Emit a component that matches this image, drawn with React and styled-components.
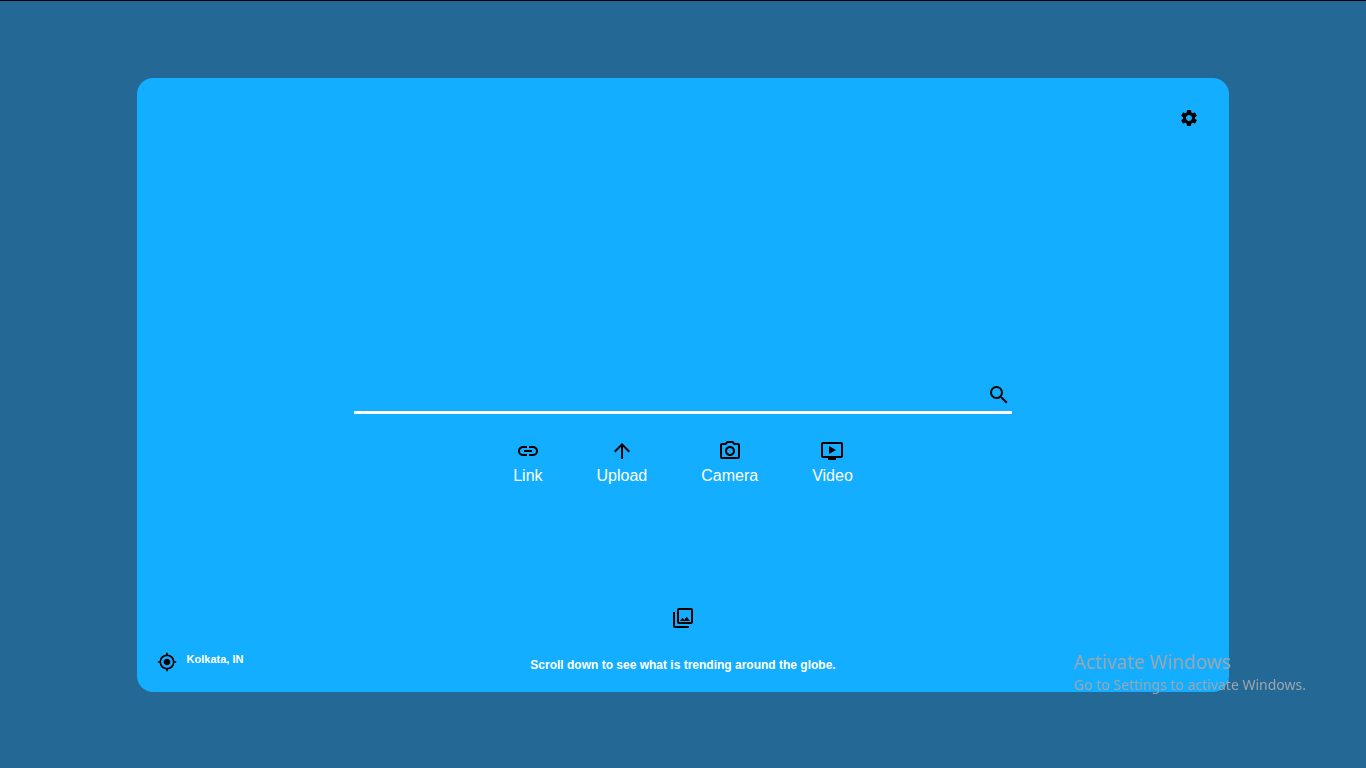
import React from "react";
import styled, { createGlobalStyle } from "styled-components";
import {
  MdSettings,
  MdSearch,
  MdLink,
  MdArrowUpward,
  MdOutlinePhotoCamera,
  MdOndemandVideo,
  MdOutlinePhotoLibrary,
  MdMyLocation,
} from "react-icons/md";

const GlobalStyle = createGlobalStyle`
  *, *::before, *::after { box-sizing: border-box; }
  body {
    margin: 0;
    background: #246896;
    font-family: "Liberation Sans", Arial, sans-serif;
  }
`;

const Page = styled.div`
  display: flex;
  min-height: 100vh;
  padding: 10vh 10vw calc(10vh - 1px);
  border-top: 1px solid #000;
`;

const Card = styled.main`
  flex: 1;
  display: flex;
  flex-direction: column;
  background: #13aeff;
  border-radius: 16px;
`;

const Header = styled.header`
  display: flex;
  justify-content: flex-end;
  padding: 30px 30px 0;
`;

const IconButton = styled.button`
  display: flex;
  padding: 0;
  border: 0;
  background: none;
  color: #000;
  cursor: pointer;
`;

const Center = styled.section`
  flex: 1;
  display: flex;
  flex-direction: column;
  justify-content: flex-end;
  align-items: center;
  gap: 25px;
  padding-bottom: 121px;
`;

const SearchBar = styled.form`
  display: flex;
  align-items: flex-start;
  width: calc(60% + 2px);
  height: 31px;
  border-bottom: 3px solid #fff;
  padding-right: 1px;
`;

const SearchInput = styled.input`
  flex: 1;
  min-width: 0;
  height: 24px;
  padding: 0 8px;
  border: 0;
  outline: 0;
  background: none;
  color: #fff;
  font: inherit;
`;

const Actions = styled.nav`
  display: flex;
  gap: 54px;
`;

const Action = styled.button`
  display: flex;
  flex-direction: column;
  align-items: center;
  gap: 4px;
  padding: 0;
  border: 0;
  background: none;
  color: #fff;
  font: 16px/18px "Liberation Sans", Arial, sans-serif;
  cursor: pointer;

  svg { color: #000; }
`;

const Footer = styled.footer`
  display: grid;
  grid-template-columns: 1fr auto 1fr;
  align-items: end;
  padding: 0 20px 20px;
`;

const Caption = styled.p`
  margin: 0;
  color: #fff;
  font-size: ${({ $size }) => $size}px;
  line-height: 14px;
  font-weight: bold;
`;

const Location = styled.div`
  display: flex;
  align-items: flex-start;
  gap: 10px;
`;

const Trending = styled.div`
  display: flex;
  flex-direction: column;
  align-items: center;
  gap: 28px;
`;

const Watermark = styled.aside`
  position: fixed;
  right: 60px;
  bottom: 73px;
  color: #9da6ad;
  font-family: "Segoe UI", "Noto Sans", sans-serif;
  pointer-events: none;
`;

const WatermarkTitle = styled.p`
  margin: 0;
  font-size: 19px;
  line-height: 26px;
`;

const WatermarkText = styled.p`
  margin: 0;
  font-size: 14px;
  line-height: 20px;
`;

const actions = [
  { label: "Link", Icon: MdLink },
  { label: "Upload", Icon: MdArrowUpward },
  { label: "Camera", Icon: MdOutlinePhotoCamera },
  { label: "Video", Icon: MdOndemandVideo },
];

export default function App() {
  return (
    <>
      <GlobalStyle />
      <Page>
        <Card>
          <Header>
            <IconButton type="button" aria-label="Settings">
              <MdSettings size={20} />
            </IconButton>
          </Header>
          <Center>
            <SearchBar role="search" onSubmit={(e) => e.preventDefault()}>
              <SearchInput type="text" aria-label="Search" />
              <IconButton type="submit" aria-label="Search">
                <MdSearch size={24} />
              </IconButton>
            </SearchBar>
            <Actions>
              {actions.map(({ label, Icon }) => (
                <Action type="button" key={label}>
                  <Icon size={24} />
                  {label}
                </Action>
              ))}
            </Actions>
          </Center>
          <Footer>
            <Location>
              <MdMyLocation size={20} />
              <Caption $size={11}>Kolkata, IN</Caption>
            </Location>
            <Trending>
              <IconButton type="button" aria-label="Trending images">
                <MdOutlinePhotoLibrary size={24} />
              </IconButton>
              <Caption $size={12}>
                Scroll down to see what is trending around the globe.
              </Caption>
            </Trending>
          </Footer>
        </Card>
      </Page>
      <Watermark>
        <WatermarkTitle>Activate Windows</WatermarkTitle>
        <WatermarkText>Go to Settings to activate Windows.</WatermarkText>
      </Watermark>
    </>
  );
}
